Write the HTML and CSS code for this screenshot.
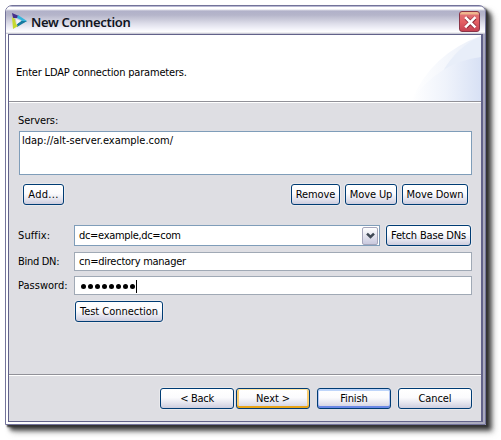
FILE: index.html
```html
<!DOCTYPE html>
<html lang="en">
<head>
<meta charset="utf-8">
<title>New Connection</title>
<link rel="stylesheet" href="styles.css">
</head>
<body>
<main class="window">
  <header class="titlebar">
    <svg class="logo" width="17" height="18" viewBox="0 0 17 18"><path d="M1 1L8 4 7 6 2 6Z" fill="#45308c"/><path d="M7 3L16 9 12 11 10 8 6 6Z" fill="#35b5dc"/><path d="M10 9L16 9 6 15 6 12Z" fill="#16799f"/><path d="M1 5L4 7 5 12 7 14 2 17Z" fill="#c5d831"/><path d="M5 7L10 9 6 12Z" fill="#f4f5fc"/></svg>
    <h1><span class="t title-text">New Connection</span></h1>
    <button class="close" aria-label="Close"><svg width="21" height="21" viewBox="0 0 21 21"><path d="M6 6L15 15M15 6L6 15" stroke="#8b2635" stroke-width="4"/><path d="M5.2 5.2L15.4 15.4M15.4 5.2L5.2 15.4" stroke="#fff" stroke-width="2.6"/></svg></button>
  </header>
  <div class="client">
    <section class="banner">
      <svg class="swoosh" width="74" height="66" viewBox="0 0 74 66"><defs><linearGradient id="a"><stop offset="0" stop-color="#fff"/><stop offset="1" stop-color="#eaeff9"/></linearGradient><linearGradient id="b"><stop offset="0" stop-color="#fff"/><stop offset=".5" stop-color="#eff3fb"/><stop offset="1" stop-color="#d8e1f5"/></linearGradient></defs><path d="M4 66Q25 18 74 1V66Z" fill="url(#a)"/><path d="M36 36Q50 12 74 1V22Q53 25 36 36Z" fill="#e8eef9"/><path d="M4 66Q32 27 74 22V66Z" fill="url(#b)"/></svg>
      <p><span class="t intro-text">Enter LDAP connection parameters.</span></p>
    </section>
    <section class="content">
      <div class="servers-label"><span class="t">Servers:</span></div>
      <div class="server-list"><span class="t url-text">ldap://alt-server.example.com/</span></div>
      <div class="server-actions">
        <button class="button add"><span class="t add-text">Add...</span></button>
        <button class="button remove"><span class="t">Remove</span></button>
        <button class="button up"><span class="t">Move Up</span></button>
        <button class="button down"><span class="t">Move Down</span></button>
      </div>
      <div class="row suffix-row"><label><span class="t suffix-label">Suffix:</span></label><div class="field combo"><span class="t suffix-value">dc=example,dc=com</span><span class="arrow"><svg width="9" height="8" viewBox="0 0 9 8"><path d="M1 1.7L4.5 5L8 1.7" fill="none" stroke="#3f4854" stroke-width="2.5"/></svg></span></div><button class="button fetch"><span class="t fetch-text">Fetch Base DNs</span></button></div>
      <div class="row bind-row"><label><span class="t bind-label">Bind DN:</span></label><div class="field"><span class="t bind-value">cn=directory manager</span></div></div>
      <div class="row password-row"><label><span class="t password-label">Password:</span></label><div class="field password"><i></i><i></i><i></i><i></i><i></i><i></i><i></i><i></i><b class="caret"></b></div></div>
      <button class="button test"><span class="t test-text">Test Connection</span></button>
    </section>
    <footer>
      <button class="button"><span class="t back-text">&lt; Back</span></button>
      <button class="button next"><span class="t">Next &gt;</span></button>
      <button class="button finish"><span class="t">Finish</span></button>
      <button class="button cancel"><span class="t">Cancel</span></button>
    </footer>
  </div>
</main>
</body>
</html>
```
FILE: styles.css
```css
* { box-sizing: border-box; }
body { margin: 0; width: 501px; height: 440px; overflow: hidden; padding: 5px; background: #fff; font: 11px/14px "DejaVu Sans Condensed", "DejaVu Sans", sans-serif; font-stretch: condensed; color: #000; }
.t { display: inline-block; white-space: nowrap; letter-spacing: -.1px; }
.window { width: 481px; height: 420px; padding: 0 2px 2px; border: 1px solid #73739a; border-radius: 7px 7px 0 0; background: linear-gradient(90deg, #fff, #d9d9e5 50%, #a9a9bd); box-shadow: 2px 2px 2px #333, 5px 5px 4px #444, 7px 7px 6px #7779; }
.titlebar { height: 28px; margin: 0 -2px; padding: 5px 5px 0 5px; display: flex; align-items: flex-start; border-radius: 6px 6px 0 0; background: linear-gradient(#b8b8d2 0 1px, #fff 1px 3px, #b1b1c9 5px, #b5b5ca 9px, #c8c8d8 13px, #dfdfeb 18px, #f3f3fa 23px, #fff 26px, #bbbbc9 28px); }
.logo { margin-top: 1px; }
h1 { margin: 2px 0 0 3px; flex: 1; font: 600 13px/19px "Noto Sans", sans-serif; color: #111522; }
h1 .title-text { letter-spacing: -.33px; }
.close { width: 21px; height: 21px; padding: 0; border: 1px solid #8a3447; border-radius: 3px; background: linear-gradient(#efb78e 0 2px, #df7074 3px, #e45f63 10px, #c54152); display: grid; place-items: center; }
.client { height: 388px; border: 1px solid #62628a; border-right-width: 2px; background: #dedee3; display: flex; flex-direction: column; }
.banner { height: 67px; position: relative; background: #fff; border-bottom: 1px solid #919198; padding: 31px 7px 0; }
.banner p { margin: 0; }
.intro-text { letter-spacing: -.18px; }
.swoosh { position: absolute; right: 0; top: 0; }
.content { height: 272px; padding: 11px 9px 0; border-top: 1px solid #fff; display: flex; flex-direction: column; }
.servers-label { height: 17px; }
.server-list { height: 44px; margin-left: 1px; border: 1px solid #7f9db9; background: #fff; padding: 2px 2px 0; }
.url-text { letter-spacing: -.01px; }
.server-actions { height: 21px; margin: 9px 4px 0 5px; display: flex; }
.button { height: 21px; width: 74px; padding: 1px 0 0; border: 1px solid #003c74; border-radius: 3px; background: linear-gradient(#fff, #fbfbfd 45%, #e3e3ed 75%, #cdcdde); box-shadow: 0 0 0 1px #ffffff55; font: inherit; color: #000; display: flex; align-items: center; justify-content: center; flex: none; }
.add { width: 41px; margin-right: auto; }
.add-text { letter-spacing: .3px; }
.remove { width: 49px; margin-right: 5px; }
.up { width: 52px; margin-right: 5px; }
.down { width: 66px; }
.row { display: flex; align-items: center; }
.row label { width: 56px; flex: none; padding-top: 1px; }
.suffix-label { letter-spacing: .1px; }
.bind-label { letter-spacing: -.3px; }
.password-label { letter-spacing: .02px; }
.field { flex: 1; height: 19px; border: 1px solid #a0a9b5; background: #fff; padding: 1px 4px 0; display: flex; align-items: center; }
.suffix-row { height: 21px; margin-top: 20px; }
.suffix-value { letter-spacing: -.32px; }
.bind-value { letter-spacing: -.25px; }
.combo { height: 21px; border-color: #7f9db9; padding: 0 1px 0 4px; }
.arrow { width: 16px; height: 18px; margin-left: auto; border: 1px solid #a5a5ba; border-radius: 2px; background: linear-gradient(#fff, #c9c9de); display: grid; place-items: center; }
.fetch { width: 85px; margin: 0 1px 0 6px; }
.fetch-text { letter-spacing: -.17px; }
.bind-row { height: 19px; margin-top: 6px; }
.password-row { height: 19px; margin-top: 5px; }
.password i { width: 5px; height: 5px; border-radius: 50%; background: #000; margin-left: 2px; }
.caret { width: 1px; height: 13px; margin-left: 1px; background: #000; }
.test { width: 88px; margin: 6px 0 0 57px; }
.test-text { letter-spacing: -.03px; }
footer { flex: 1; border-top: 1px solid #919198; box-shadow: inset 0 1px #fff; padding: 13px 9px 0 151px; display: flex; }
.back-text { letter-spacing: -.3px; }
.next { margin-left: 2px; box-shadow: inset 0 -2px #e8a317, inset 0 1px #ffe5a2, inset 2px 0 #f9ce72, inset -2px 0 #f9ce72; }
.finish { margin-left: 7px; box-shadow: inset 0 -2px #6987e5, inset 0 2px #bed5fa, inset 1px 0 #b3c5f3, inset -1px 0 #b3c5f3; }
.cancel { margin-left: 7px; }
```
